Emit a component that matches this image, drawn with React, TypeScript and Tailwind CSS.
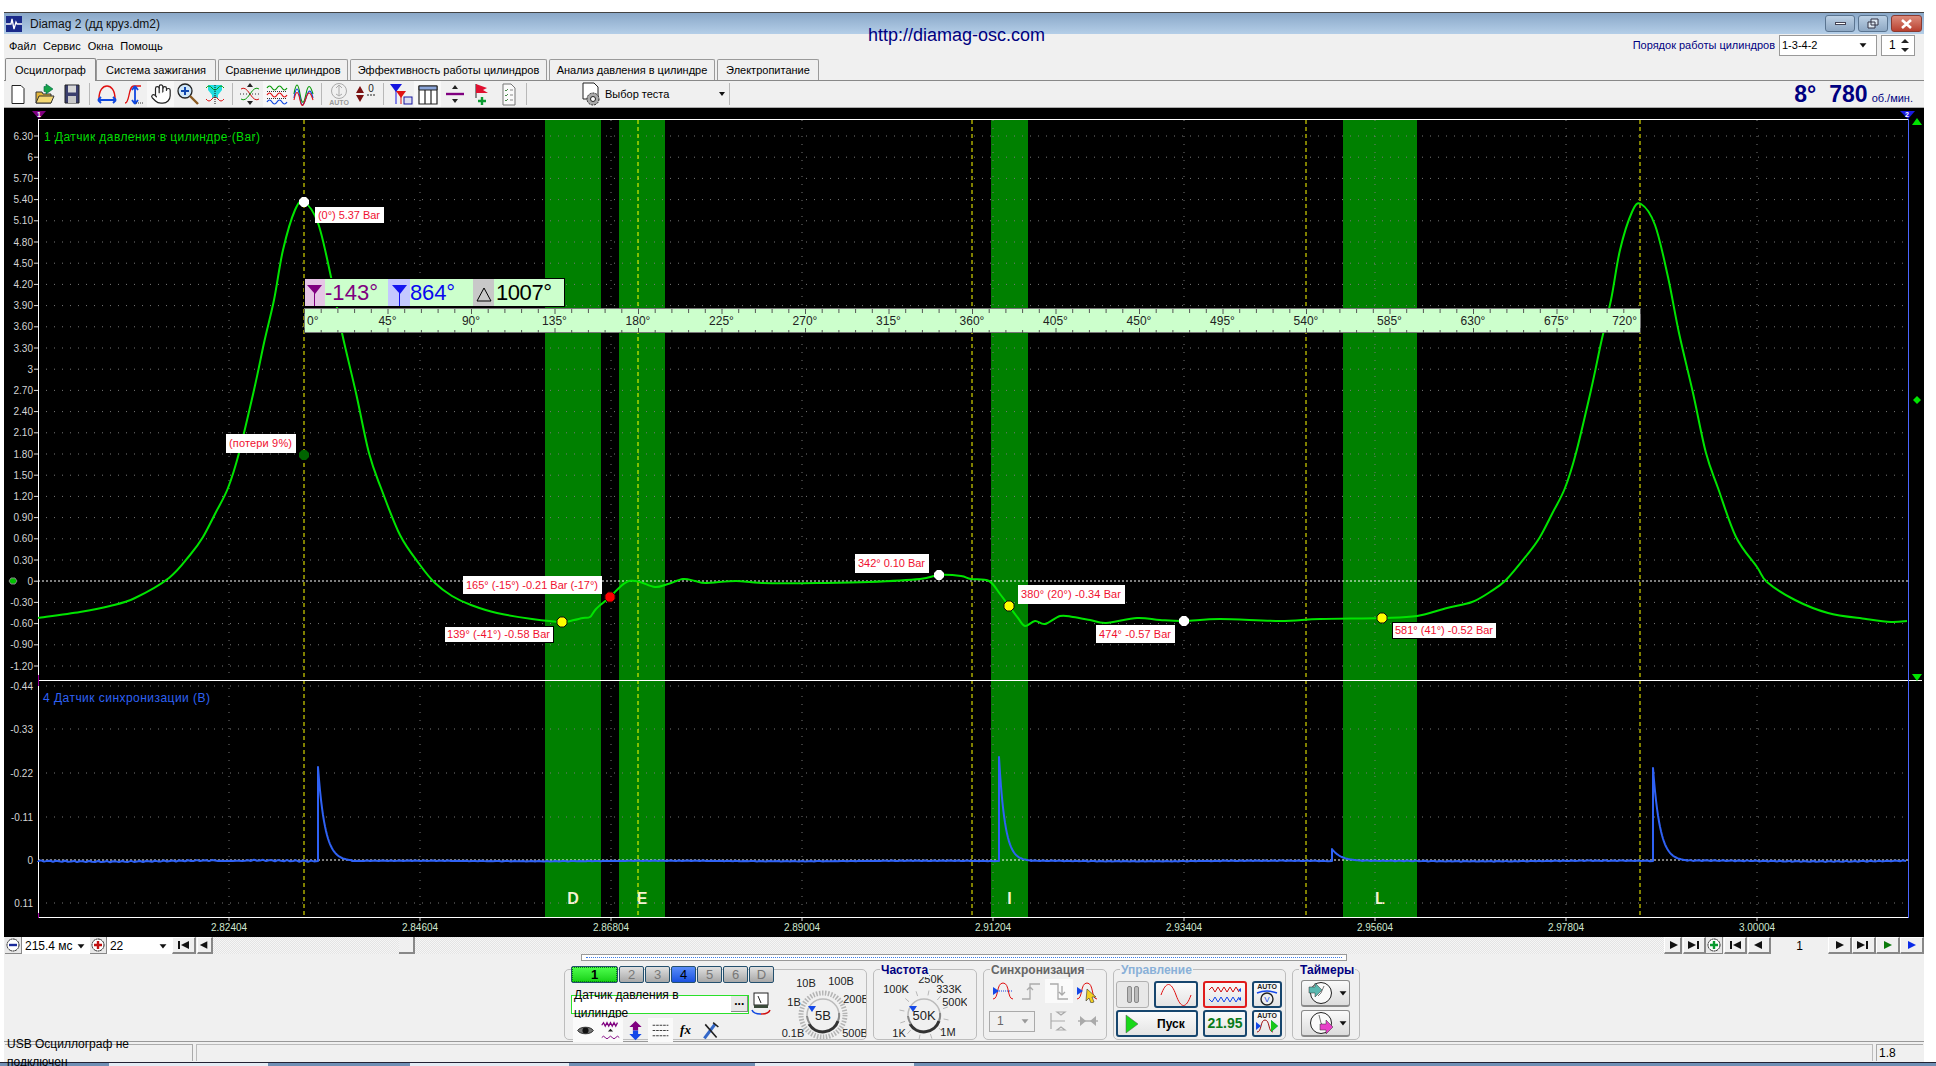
import type { ReactNode } from 'react';
import { Hand } from 'lucide-react';

type Pt = [number, number];

const smooth = (pts: Pt[]) => {
  let d = `M${pts[0][0]} ${pts[0][1]}`;
  for (let i = 0; i < pts.length - 1; i++) {
    const p0 = pts[Math.max(i - 1, 0)];
    const p1 = pts[i];
    const p2 = pts[i + 1];
    const p3 = pts[Math.min(i + 2, pts.length - 1)];
    const c1x = p1[0] + (p2[0] - p0[0]) / 6;
    const c1y = p1[1] + (p2[1] - p0[1]) / 6;
    const c2x = p2[0] - (p3[0] - p1[0]) / 6;
    const c2y = p2[1] - (p3[1] - p1[1]) / 6;
    d += `C${c1x.toFixed(1)} ${c1y.toFixed(1)} ${c2x.toFixed(1)} ${c2y.toFixed(1)} ${p2[0]} ${p2[1]}`;
  }
  return d;
};

const GREEN_PTS: Pt[] = [
  [38, 618], [80, 612], [110, 606], [135, 598], [169, 578], [190, 555], [203, 537], [216, 512], [228, 488], [239, 453], [254, 390], [264, 343],
  [274, 300], [283, 250], [295, 210], [304, 202], [318, 223], [331, 277], [342, 333], [356, 393], [369, 453], [381, 488],
  [400, 535], [420, 565], [435, 583], [452, 596], [471, 605], [497, 613], [532, 619], [562, 622], [574, 620], [583, 618], [590, 617], [596, 609],
  [610, 597], [620, 587], [629, 581], [640, 582], [655, 587], [668, 584], [683, 579], [695, 581], [706, 583], [736, 581], [762, 583],
  [818, 583], [869, 582], [920, 579], [939, 575], [961, 576], [971, 579], [989, 581], [1000, 594], [1009, 606], [1018, 618], [1025, 626],
  [1035, 621], [1045, 624], [1060, 616], [1073, 617], [1090, 620], [1106, 623], [1137, 618], [1160, 620], [1184, 621], [1220, 619], [1280, 621],
  [1320, 619], [1382, 618], [1417, 616], [1447, 608], [1472, 602], [1490, 592], [1506, 580], [1527, 555], [1540, 537], [1553, 512], [1565, 488],
  [1576, 453], [1591, 390], [1601, 343], [1611, 300], [1620, 250], [1632, 212], [1641, 204], [1655, 225], [1668, 277], [1679, 333], [1693, 393],
  [1706, 453], [1718, 488], [1736, 537], [1757, 567], [1767, 582], [1795, 600], [1828, 613], [1866, 619], [1891, 622], [1907, 621],
];

const spike = (x: number, top: number, tau: number, len: number) => {
  let s = `L${x} 861L${x} ${top}`;
  for (let dx = 1; dx <= len; dx++) {
    s += `L${x + dx} ${(861 - (861 - top) * Math.exp(-dx / tau)).toFixed(1)}`;
  }
  return s;
};

const baseline = (a: number, b: number, amp: number) => {
  let s = '';
  for (let x = a; x < b; x += 3) {
    const n = Math.sin(x * 1.7) * Math.cos(x * 0.37);
    s += `L${x} ${(861 + n * amp).toFixed(1)}`;
  }
  return s;
};

const BLUE_PATH =
  'M38 861' +
  baseline(38, 218, 1.2) +
  baseline(218, 248, 0.3) +
  baseline(248, 317, 1.4) +
  spike(318, 767, 7, 34) +
  baseline(352, 998, 0.5) +
  spike(999, 757, 6, 32) +
  baseline(1031, 1331, 0.6) +
  spike(1332, 849, 9, 30) +
  baseline(1362, 1652, 0.7) +
  spike(1653, 768, 7, 34) +
  baseline(1687, 1908, 0.9);

const Y_TOP = ['6.30', '6', '5.70', '5.40', '5.10', '4.80', '4.50', '4.20', '3.90', '3.60', '3.30', '3', '2.70', '2.40', '2.10', '1.80', '1.50', '1.20', '0.90', '0.60', '0.30', '0', '-0.30', '-0.60', '-0.90', '-1.20'];
const Y_LOW: [string, number][] = [['-0.44', 686], ['-0.33', 729], ['-0.22', 773], ['-0.11', 817], ['0', 860], ['0.11', 903]];
const X_TICKS = ['2.82404', '2.84604', '2.86804', '2.89004', '2.91204', '2.93404', '2.95604', '2.97804', '3.00004'];
const CURSORS = [304, 638, 972, 1306, 1640];
const ZONES: [string, number, number][] = [['D', 545, 601], ['E', 619, 665], ['I', 991, 1028], ['L', 1343, 1417]];
const LABELS: [string, number, number, number, number, boolean?][] = [
  ['(0°) 5.37 Bar', 315, 383, 207, 222],
  ['(потери 9%)', 226, 295, 434, 452],
  ['165° (-15°) -0.21 Bar (-17°)', 463, 601, 576, 593],
  ['139° (-41°) -0.58 Bar', 444, 553, 626, 642, true],
  ['342° 0.10 Bar', 855, 928, 554, 572],
  ['380° (20°) -0.34 Bar', 1018, 1124, 585, 603],
  ['474° -0.57 Bar', 1096, 1174, 625, 642],
  ['581° (41°) -0.52 Bar', 1392, 1496, 622, 638, true],
];

const Hex = ({ x, y, c, line }: { x: number; y: number; c: string; line?: string }) => (
  <path d={`M${x - 2} ${y - 5}h4l3 3v4l-3 3h-4l-3 -3v-4z`} fill={c} stroke={line ?? 'none'} strokeWidth={line ? 1 : 0} />
);

const Chart = () => {
  const yTop = (i: number) => 136 + i * 21.2;
  return (
    <svg viewBox="4 108 1920 829" width={1920} height={829} className="block bg-black">
      {/* green zones */}
      {ZONES.map(([n, a, b]) => (
        <g key={n}>
          <rect x={a} y={120} width={b - a} height={797} fill="#008000" />
          <text x={(a + b) / 2} y={904} textAnchor="middle" fontSize={16} fontWeight={700} fill="#f4f4d0">{n}</text>
        </g>
      ))}
      {/* grid */}
      {Y_TOP.map((v, i) => (
        <g key={v}>
          {v !== '0' && <line x1={38} x2={1908} y1={yTop(i)} y2={yTop(i)} stroke="#777" strokeDasharray="1 7" />}
          <line x1={34} x2={38} y1={yTop(i)} y2={yTop(i)} stroke="#ddd" />
          <text x={33} y={yTop(i) + 3.5} textAnchor="end" fontSize={10} fill="#d4d4d4">{v}</text>
        </g>
      ))}
      {Y_LOW.map(([v, y]) => (
        <g key={v}>
          {v !== '0' && <line x1={38} x2={1908} y1={y} y2={y} stroke="#777" strokeDasharray="1 7" />}
          <text x={33} y={y + 3.5} textAnchor="end" fontSize={10} fill="#d4d4d4">{v}</text>
        </g>
      ))}
      {X_TICKS.map((t, i) => {
        const x = 229 + i * 191;
        return (
          <g key={t}>
            <line x1={x} x2={x} y1={120} y2={917} stroke="#777" strokeDasharray="1 7" />
            <line x1={x} x2={x} y1={917} y2={921} stroke="#ddd" />
            <text x={x} y={931} textAnchor="middle" fontSize={10} fill="#cfe6cf">{t}</text>
          </g>
        );
      })}
      <line x1={38} x2={1908} y1={581} y2={581} stroke="#fff" strokeDasharray="2 2" />
      <line x1={38} x2={1908} y1={860} y2={860} stroke="#fff" strokeDasharray="2 2" />
      {CURSORS.map((x) => (
        <line key={x} x1={x} x2={x} y1={120} y2={917} stroke="#ffff00" strokeDasharray="4 3" />
      ))}
      {/* frame */}
      <line x1={38} x2={1908} y1={119.5} y2={119.5} stroke="#fff" />
      <line x1={38} x2={1922} y1={680.5} y2={680.5} stroke="#fff" />
      <line x1={38} x2={1908} y1={917.5} y2={917.5} stroke="#fff" />
      <line x1={38.5} x2={38.5} y1={119} y2={918} stroke="#fff" />
      <line x1={1908.5} x2={1908.5} y1={119} y2={918} stroke="#4a66ff" />
      <line x1={38.5} x2={38.5} y1={675} y2={686} stroke="#a000a0" />
      <line x1={38.5} x2={38.5} y1={913} y2={918} stroke="#a000a0" />

      {/* traces */}
      <path d={smooth(GREEN_PTS)} fill="none" stroke="#00e400" strokeWidth={2} />
      <path d={BLUE_PATH} fill="none" stroke="#2f62f5" strokeWidth={2} strokeLinejoin="round" />

      {/* channel captions */}
      <text x={44} y={141} fontSize={12} fill="#00dc00" textLength={216}>1 Датчик давления в цилиндре (Bar)</text>
      <text x={43} y={702} fontSize={12} fill="#2f62f5" textLength={167}>4 Датчик синхронизации (В)</text>

      {/* side markers */}
      <path d="M32 111h14l-7 8z" fill="#800080" />
      <text x={39} y={117} textAnchor="middle" fontSize={7} fontWeight={700} fill="#fff">1</text>
      <path d="M1900 111h15l-7 8z" fill="#1a1ae0" />
      <text x={1907} y={117} textAnchor="middle" fontSize={7} fontWeight={700} fill="#fff">2</text>
      <path d="M1912 125l5 -7 5 7z" fill="#00e400" />
      <path d="M1913 400l4 -4 4 4 -4 4z" fill="#00e400" />
      <path d="M1912 674h10l-5 7z" fill="#00e400" />
      <path d="M11 578h4l2 3 -2 3h-4l-2 -3z" fill="#00c000" stroke="#888" />

      {/* degree readout */}
      <rect x={304.5} y={278.5} width={260} height={28} fill="#ccffcc" stroke="#000" />
      <rect x={305} y={279} width={20} height={27} fill="#e6c6e6" />
      <rect x={388} y={279} width={22} height={27} fill="#c4c8ff" />
      <rect x={473} y={279} width={21} height={27} fill="#c8c8c8" />
      <path d="M307 285h15l-7 9z" fill="#800080" />
      <line x1={314.5} x2={314.5} y1={288} y2={306} stroke="#800080" />
      <path d="M392 285h15l-7 9z" fill="#1414f0" />
      <line x1={399.5} x2={399.5} y1={288} y2={306} stroke="#1414f0" />
      <path d="M477 301l7 -13 7 13z" fill="none" stroke="#000" />
      <text x={325} y={300} fontSize={22} fill="#800080" textLength={53}>-143°</text>
      <text x={410} y={300} fontSize={22} fill="#0a0af0" textLength={45}>864°</text>
      <text x={496} y={300} fontSize={22} fill="#000" textLength={56}>1007°</text>

      {/* degree ruler */}
      <rect x={304.5} y={308.5} width={1336} height={24} fill="#ccffcc" stroke="#777" />
      {Array.from({ length: 81 }, (_, i) => {
        const x = 304.5 + i * 16.7;
        const long = i % 5 === 0;
        return (
          <g key={i}>
            <line x1={x} x2={x} y1={309} y2={long ? 314 : 313} stroke="#555" />
            <line x1={x} x2={x} y1={long ? 328 : 330} y2={333} stroke="#555" />
          </g>
        );
      })}
      {Array.from({ length: 17 }, (_, i) => {
        const x = 304 + i * 83.5;
        const first = i === 0;
        const last = i === 16;
        return (
          <text key={i} x={first ? 307 : last ? 1637 : x} y={325} fontSize={12} fill="#222" textAnchor={first ? 'start' : last ? 'end' : 'middle'}>
            {i * 45}°
          </text>
        );
      })}

      {/* measure points */}
      <Hex x={304} y={202} c="#fff" />
      <Hex x={939} y={575} c="#fff" />
      <Hex x={1184} y={621} c="#fff" />
      <Hex x={562} y={622} c="#ffff00" line="#111" />
      <Hex x={1009} y={606} c="#ffff00" line="#111" />
      <Hex x={1382} y={618} c="#ffff00" line="#111" />
      <Hex x={610} y={597} c="#ff0000" line="#400" />
      <Hex x={304} y={455} c="#006400" />

      {LABELS.map(([t, a, b, c, d, frame]) => (
        <g key={t}>
          <rect x={a + 0.5} y={c + 0.5} width={b - a} height={d - c} fill="#fff" stroke={frame ? '#000' : '#fff'} />
          <text x={a + 3} y={(c + d) / 2 + 4} fontSize={11} fill="#f01030" textLength={b - a - 6}>{t}</text>
        </g>
      ))}
    </svg>
  );
};

/* small toolbar drawings, 24x24 */
const Ic = ({ children, s = 24 }: { children: ReactNode; s?: number }) => (
  <svg width={s} height={s} viewBox="0 0 24 24" fill="none">{children}</svg>
);

const ICONS: Record<string, ReactNode> = {
  doc: <path d="M6 3.5h9l3 3v15H6z" fill="#fff" stroke="#222" />,
  open: (
    <>
      <path d="M3 10h6l1 2h8v9H3z" fill="#e2b53a" stroke="#333" />
      <path d="M3 21l3 -7h15l-3 7z" fill="#f4d873" stroke="#333" />
      <path d="M13 2l7 5 -7 5v-2.500h-2v-5h2z" fill="#16a34a" stroke="#064" strokeWidth={0.6} />
    </>
  ),
  save: (
    <>
      <path d="M5 3h14v18H5z" fill="#3b3f6e" stroke="#222" />
      <path d="M8 3.500h8v7H8z" fill="#d8d8d8" />
      <path d="M8 14h8v7H8z" fill="#c8c8c8" />
    </>
  ),
  arch: (
    <>
      <path d="M4 17C4 8 8 4 12 4s8 4 8 13" stroke="#e01010" strokeWidth={1.5} />
      <path d="M3 18h18M3 18l3 -3M3 18l3 3M21 18l-3 -3M21 18l-3 3" stroke="#1048e0" strokeWidth={1.8} />
    </>
  ),
  scurve: (
    <>
      <path d="M3 21c5 0 3 -17 9 -17h7" stroke="#e01010" strokeWidth={1.3} />
      <path d="M13 4v18M13 4l-3 4M13 4l3 4M13 22l-3 -4M13 22l3 -4" stroke="#1048e0" strokeWidth={1.8} />
      <path d="M14 21h7" stroke="#333" strokeDasharray="1 1" />
    </>
  ),
  zoom: (
    <>
      <circle cx={9} cy={9} r={7} fill="#cfe6f8" stroke="#222" strokeWidth={1.3} />
      <path d="M9 5v8M5 9h8" stroke="#1048b0" strokeWidth={2} />
      <path d="M14 14l8 8" stroke="#8a5a20" strokeWidth={2.4} />
    </>
  ),
  funnel: (
    <>
      <path d="M5 3h14v5l-4 5v3h-6v-3L5 8z" fill="#22dde0" />
      <path d="M3 6q3 -4 6 0t6 0 6 0" stroke="#0a9a0a" />
      <path d="M3 17q3 4 6 0t6 0 6 0" stroke="#e01010" />
      <path d="M12 3v19" stroke="#111" strokeDasharray="1 1" />
    </>
  ),
  cross: (
    <>
      <path d="M3 7q4 -3 9 5t9 5" stroke="#d01010" />
      <path d="M3 17q4 3 9 -5t9 -5" stroke="#0a9a0a" />
      <path d="M2 12h20" stroke="#333" strokeDasharray="1 2" />
      <path d="M12 1l-3 4h6zM12 23l-3 -4h6z" fill="#222" />
    </>
  ),
  stack: (
    <>
      <path d="M2 6q2.500 -4 5 0t5 0 5 0 5 0" stroke="#0a9a0a" strokeWidth={1.2} />
      <path d="M2 13q2.500 -4 5 0t5 0 5 0 5 0" stroke="#e01010" strokeWidth={1.2} />
      <path d="M2 20q2.500 -4 5 0t5 0 5 0 5 0" stroke="#1048e0" strokeWidth={1.2} />
      <path d="M2 9.500h20M2 16.500h20" stroke="#333" strokeDasharray="1 1" />
    </>
  ),
  over: (
    <>
      <path d="M2 12c2 -12 4 -12 6 0s4 10 6 0 4 -10 7 0" stroke="#0a9a0a" strokeWidth={1.2} />
      <path d="M2 16c2 -12 4 -12 6 0s4 6 6 0 4 -12 7 0" stroke="#1048e0" strokeWidth={1.2} />
      <path d="M2 18c2 -10 4 -10 6 0s4 4 6 -2 4 -8 7 2" stroke="#e01010" strokeWidth={1.1} />
    </>
  ),
  autoOff: (
    <>
      <circle cx={12} cy={9} r={7.500} stroke="#aaa" />
      <path d="M12 3v10M9 6l3 -3 3 3M9 12l3 2 3 -2" stroke="#aaa" />
      <text x={12} y={23} textAnchor="middle" fontSize={7} fontWeight={700} fill="#999">AUTO</text>
    </>
  ),
  zero: (
    <>
      <path d="M6 4l-4 7h8zM6 20l-4 -7h8z" fill="#7a1010" />
      <text x={17} y={10} textAnchor="middle" fontSize={10} fill="#222">0</text>
      <path d="M13 13h9" stroke="#222" strokeDasharray="2 1" />
    </>
  ),
  trig: (
    <>
      <path d="M1 2h12l-6 8z" fill="#1414e0" />
      <path d="M7 8v14" stroke="#1414e0" />
      <path d="M7 9h10l-5 7z" fill="#e01010" />
      <path d="M12 14v8" stroke="#e01010" />
      <rect x={15} y={15} width={8} height={7} fill="#dde" stroke="#1414a0" />
    </>
  ),
  table: (
    <>
      <path d="M3 4h18v18H3z" fill="#fff" stroke="#222" strokeWidth={1.2} />
      <path d="M3 4h18v4H3z" fill="#8aa4d8" stroke="#222" />
      <path d="M9 8v14M15 8v14" stroke="#222" strokeWidth={1.2} />
    </>
  ),
  divide: (
    <>
      <path d="M3 12h18" stroke="#800080" strokeWidth={2.4} />
      <path d="M12 3l-3 4h6zM12 21l-3 -4h6z" fill="#222" />
    </>
  ),
  flag: (
    <>
      <path d="M6 2v14" stroke="#222" />
      <path d="M6 2l11 4 -4 2 5 3H6z" fill="#e01030" />
      <path d="M12 15v8M8 19h8" stroke="#0a9a30" strokeWidth={2.4} />
    </>
  ),
  list: (
    <>
      <path d="M6 2h8l4 4v17H6z" fill="#fafafa" stroke="#777" />
      <path d="M8 8l1 1 2 -2M8 13l1 1 2 -2M8 18l1 1 2 -2" stroke="#4a8a4a" />
      <path d="M13 8h3M13 13h3M13 18h3" stroke="#888" />
    </>
  ),
  testDoc: (
    <>
      <path d="M4 1h11l4 4v12H4z" fill="#fff" stroke="#222" />
      <circle cx={14} cy={17} r={6} fill="#aaa" stroke="#222" strokeDasharray="2 1" />
      <circle cx={14} cy={17} r={2.500} fill="#fff" stroke="#222" />
    </>
  ),
  eye: (
    <>
      <path d="M3 12c3 -5 15 -5 18 0 -3 5 -15 5 -18 0z" fill="#777" stroke="#222" />
      <circle cx={12} cy={12} r={3.500} fill="#111" />
    </>
  ),
  chanWave: (
    <>
      <path d="M2 6l2 -3 2 4 2 -4 2 4 2 -4 2 4 2 -4 2 4 2 -4" stroke="#800080" strokeWidth={1.4} />
      <path d="M2 20q2 -3 4 0t4 0 4 0 4 0 4 0" stroke="#800080" strokeWidth={1.1} />
      <path d="M12 10l-3 3h6z" fill="#222" />
    </>
  ),
  updown: (
    <>
      <path d="M12 1l7 7h-4v4H9V8H5z" fill="#800080" />
      <path d="M12 23l7 -7h-4v-4H9v4H5z" fill="#1448e8" />
    </>
  ),
  lines: <path d="M3 6h18M3 12h18M3 18h18" stroke="#222" strokeDasharray="3 1" />,
  tools: (
    <>
      <path d="M5 21L17 5" stroke="#3468c8" strokeWidth={3.5} />
      <path d="M6 5l13 15M15 3l6 5" stroke="#222" strokeWidth={1.8} />
    </>
  ),
  meter: (
    <>
      <rect x={5} y={1} width={14} height={12} fill="#fff" stroke="#222" />
      <path d="M12 11L9 4" stroke="#222" />
      <path d="M5 13h14v3H5z" fill="#3a4a3a" />
      <path d="M3 18a9 5 0 0 0 9 4" stroke="#1048e0" strokeWidth={1.5} />
      <path d="M21 18a9 5 0 0 1 -9 4" stroke="#d01010" strokeWidth={1.5} />
    </>
  ),
  edgeUp: (
    <>
      <path d="M2 20c6 0 3 -16 10 -16s4 16 10 16" stroke="#e01010" strokeWidth={1} />
      <path d="M2 12h20" stroke="#1448e8" strokeDasharray="1 1" />
      <path d="M2 8l6 4 -6 4z" fill="#1448e8" />
    </>
  ),
  stepUp: <path d="M3 20h8V5h10M11 17V9M8 11l3 -3 3 3" stroke="#aaa" strokeWidth={1.3} />,
  stepDown: <path d="M3 5h8v15h10M15 7v9M12 13l3 3 3 -3" stroke="#aaa" strokeWidth={1.3} />,
  edgeCursor: (
    <>
      <path d="M2 20c6 0 3 -16 10 -16s4 16 10 16" stroke="#e01010" strokeWidth={1} />
      <path d="M2 8l6 4 -6 4z" fill="#1448e8" />
      <path d="M12 10l9 8h-4l2 5 -3 1 -2 -5 -3 3z" fill="#f4d020" stroke="#333" strokeWidth={0.6} />
    </>
  ),
  squeezeOut: <path d="M3 4v16M3 12h14M13 6l-4 -3h8zM13 18l-4 3h8z" stroke="#aaa" strokeWidth={1.2} />,
  squeezeIn: (
    <>
      <path d="M2 12h20" stroke="#aaa" strokeWidth={1.4} />
      <path d="M4 7l6 5 -6 5zM20 7l-6 5 6 5z" fill="#aaa" />
    </>
  ),
  autoV: (
    <>
      <text x={12} y={6} textAnchor="middle" fontSize={7} fontWeight={700} fill="#222">AUTO</text>
      <path d="M2 10q10 -4 20 0" stroke="#1448e8" strokeWidth={1.4} />
      <circle cx={12} cy={16} r={6} fill="#eee" stroke="#222" strokeWidth={1.4} />
      <text x={12} y={19} textAnchor="middle" fontSize={8} fill="#1448e8">V</text>
    </>
  ),
  autoSync: (
    <>
      <text x={12} y={6} textAnchor="middle" fontSize={7} fontWeight={700} fill="#222">AUTO</text>
      <path d="M2 20c5 0 3 -12 8 -12s3 12 8 12" stroke="#a01010" />
      <path d="M1 10l5 4 -5 4zM16 8l7 6 -7 6z" fill="#1448e8" />
      <path d="M16 8l7 6 -7 6z" fill="#18c818" />
    </>
  ),
};

const ToolBtn = ({ icon, on, children }: { icon?: string; on?: boolean; children?: ReactNode }) => (
  <div className={`w-[27px] h-[26px] flex items-center justify-center ${on ? 'bg-[#f8f8f8]' : ''}`}>
    {icon ? <Ic>{ICONS[icon]}</Ic> : children}
  </div>
);

const ToolSep = () => (
  <div className="w-2 h-[26px] flex justify-center">
    <div className="w-px h-[22px] mt-[2px] bg-[#b8b8b8]" />
  </div>
);

const TABS: [string, number][] = [
  ['Система зажигания', 120],
  ['Сравнение цилиндров', 130],
  ['Эффективность работы цилиндров', 197],
  ['Анализ давления в цилиндре', 166],
  ['Электропитание', 102],
];

const Triangle = ({ d, fill = '#111', w = 14 }: { d: string; fill?: string; w?: number }) => (
  <svg width={w} height={12} viewBox="0 0 14 12">
    <path d={d} fill={fill} />
  </svg>
);

const PLAY = 'M4 2l8 4 -8 4z';
const BACK = 'M10 2L2 6l8 4z';
const LAST = 'M1 2l8 4 -8 4zM10 2h2v8h-2z';
const FIRST = 'M13 2L5 6l8 4zM2 2h2v8H2z';

const NavBtn = ({ d, w, fill, flat }: { d: string; w: number; fill?: string; flat?: boolean }) => (
  <div
    className={`h-[17px] flex items-center justify-center bg-[#f0f0f0] border-r-2 border-b-2 border-r-[#888] border-b-[#888] border-l border-t border-l-white border-t-white ${flat ? 'ml-px' : ''}`}
    style={{ width: w }}
  >
    <Triangle d={d} fill={fill} />
  </div>
);

const RoundBtn = ({ sign, c }: { sign: 'm' | 'p'; c: string }) => (
  <div className="w-[17px] h-[17px] flex items-center justify-center bg-[#e8e8e8] border-r border-b border-[#888]">
    <svg width={14} height={14} viewBox="0 0 14 14">
      <circle cx={7} cy={7} r={6} fill="#fff" stroke="#222" strokeDasharray="2 0.5" />
      <path d={sign === 'p' ? 'M7 3v8M3 7h8' : 'M3 7h8'} stroke={c} strokeWidth={2.4} />
    </svg>
  </div>
);

const ChanBtn = ({ t, tone }: { t: string; tone: 'on' | 'blue' | 'off' }) => (
  <div
    className={`h-[17px] flex items-center justify-center text-[13px] rounded-[2px] border border-[#24506e] ${
      tone === 'on'
        ? 'w-[47px] font-bold bg-linear-to-b from-[#4cff4c] to-[#10d010] text-black outline-1 -outline-offset-2 outline-dotted outline-[#0a7a0a]'
        : tone === 'blue'
          ? 'w-[25px] bg-linear-to-b from-[#5a8cf8] to-[#1a50e0] text-black'
          : 'w-[25px] bg-linear-to-b from-[#e0e0e0] to-[#a8a8a8] text-[#777]'
    }`}
  >
    {t}
  </div>
);

const GroupBox = ({ w, title, tc, lx, children, className = '' }: { w: number; title: string; tc?: string; lx?: number; children: ReactNode; className?: string }) => (
  <div className={`relative h-[71px] rounded-[5px] border border-[#bdbdbd] shrink-0 ${className}`} style={{ width: w }}>
    {title && (
      <div className={`absolute -top-[7px] px-[1px] bg-[#f0f0f0] text-[12px] leading-[14px] font-bold ${tc}`} style={{ left: lx ?? 6 }}>
        {title}
      </div>
    )}
    {children}
  </div>
);

type KnobLabel = [string, number, number];

const Knob = ({ labels, value, dense }: { labels: KnobLabel[]; value: string; dense?: boolean }) => (
  <svg width={86} height={69} viewBox="-43 -45 86 69" className="shrink-0">
    {dense ? (
      <circle r={22} fill="none" stroke="#b4b4b4" strokeWidth={5} strokeDasharray="1.500 1.500" />
    ) : (
      Array.from({ length: 12 }, (_, i) => {
        const a = (i * Math.PI * 2) / 12 + 0.2;
        return <line key={i} x1={Math.cos(a) * 20} y1={Math.sin(a) * 20} x2={Math.cos(a) * 25} y2={Math.sin(a) * 25} stroke="#b8b8b8" />;
      })
    )}
    <circle r={16} fill="#f0f0f0" stroke="#bbb" strokeWidth={1.5} />
    <path d="M-14 9A16 16 0 0 0 15 6" fill="none" stroke="#333" strokeWidth={3} />
    <path d="M-16 1A16 16 0 0 0 -13 9M15 6A16 16 0 0 0 16 -2" fill="none" stroke="#888" strokeWidth={2} />
    <path d="M-15 -9h8l-4 6z" fill="#1448e8" />
    <text x={0} y={5} textAnchor="middle" fontSize={13} fill="#222">{value}</text>
    {labels.map(([t, x, y]) => (
      <text key={t} x={x} y={y} textAnchor="middle" fontSize={11} fill="#222">{t}</text>
    ))}
  </svg>
);

const CtlBtn = ({ w, red, children, className = '' }: { w: number; red?: boolean; children: ReactNode; className?: string }) => (
  <div
    className={`h-[27px] flex items-center justify-center rounded-[3px] border-2 bg-linear-to-b from-[#fbfbfb] to-[#e4e4e4] ${red ? 'border-[#e01c1c]' : 'border-[#17466e]'} ${className}`}
    style={{ width: w }}
  >
    {children}
  </div>
);

const Clock = ({ hand, arrow }: { hand: string; arrow: string }) => (
  <svg width={26} height={24} viewBox="0 0 26 24">
    <circle cx={13} cy={12} r={10.500} fill="#fafafa" stroke="#222" />
    <path d={hand} stroke="#777" fill="none" />
    <path d={arrow} fill="#333" />
  </svg>
);

const TimerBtn = ({ hand, arrow, c }: { hand: string; arrow: string; c: string }) => (
  <div className="w-[49px] h-[27px] flex items-center gap-[3px] pl-[6px] rounded-[3px] border border-[#8a8a8a] border-b-2 bg-linear-to-b from-[#fafafa] to-[#dcdcdc]">
    <svg width={26} height={24} viewBox="0 0 26 24">
      <circle cx={13} cy={12} r={10.500} fill="#fafafa" stroke="#222" />
      <path d={hand} stroke="#777" fill="none" />
      <path d={arrow} fill={c} stroke="#333" strokeWidth={0.5} />
    </svg>
    <Triangle d="M3 4h8l-4 5z" w={12} />
  </div>
);

const App = () => (
  <div className="relative w-[1936px] h-[1066px] overflow-hidden bg-white font-['Liberation_Sans',sans-serif] text-[11px] text-black">
    <div className="h-3" />
    <div className="ml-1 w-[1920px] bg-[#f0f0f0] border-t border-[#444]">
      {/* title bar */}
      <div className="relative h-[21px] flex items-center bg-linear-to-b from-[#8aa8c8] to-[#b4cee8] pl-[2px]">
        <svg width={16} height={16} viewBox="0 0 16 16" className="mr-2 shrink-0">
          <rect width={16} height={16} fill="#1a2a8a" />
          <path d="M0 8h5l1 -5 2 10 2 -7 1 2h5" fill="none" stroke="#fff" strokeWidth={1.3} />
        </svg>
        <span className="text-[12px] text-[#111]">Diamag 2 (дд круз.dm2)</span>
        <div className="ml-auto mr-[2px] flex gap-[3px]">
          <div className="w-[30px] h-[17px] flex items-center justify-center rounded-[3px] border border-[#5a7490] bg-linear-to-b from-[#bcd0e4] to-[#8ea8c4]">
            <div className="w-[11px] h-[3px] bg-white border border-[#445]" />
          </div>
          <div className="w-[30px] h-[17px] flex items-center justify-center rounded-[3px] border border-[#5a7490] bg-linear-to-b from-[#bcd0e4] to-[#8ea8c4]">
            <svg width={12} height={11} viewBox="0 0 12 11">
              <path d="M4 1h7v6H4zM1 4h7v6H1z" fill="#dde8f2" stroke="#334" />
            </svg>
          </div>
          <div className="w-[31px] h-[17px] flex items-center justify-center rounded-[3px] border border-[#8a3a30] bg-linear-to-b from-[#dc8a7a] to-[#b84030]">
            <svg width={13} height={10} viewBox="0 0 13 10">
              <path d="M2 1l9 8M11 1L2 9" stroke="#fff" strokeWidth={2.6} />
            </svg>
          </div>
        </div>
      </div>

      {/* menu row */}
      <div className="relative h-[24px] flex items-center pl-[5px] text-[11px]">
        <span className="mr-[7px]">Файл</span>
        <span className="mr-[7px]">Сервис</span>
        <span className="mr-[7px]">Окна</span>
        <span>Помощь</span>
        <div className="ml-auto mr-[9px] flex items-center h-[21px] -mt-[2px]">
          <span className="text-[11px] text-[#000080] mr-[4px]">Порядок работы цилиндров</span>
          <div className="w-[98px] h-[21px] flex items-center justify-between pl-[2px] pr-[7px] bg-white border border-[#999]">
            <span>1-3-4-2</span>
            <Triangle d="M3 4h8l-4 5z" w={12} />
          </div>
          <div className="ml-1 w-[34px] h-[21px] flex items-center justify-between pl-[7px] pr-[4px] bg-white border border-[#999] text-[12px]">
            <span>1</span>
            <svg width={10} height={15} viewBox="0 0 10 15">
              <path d="M5 1l4 4H1zM5 14l4 -4H1z" fill="#222" />
            </svg>
          </div>
        </div>
      </div>
      <div className="absolute left-[868px] top-[24px] text-[18px] leading-[22px] text-[#000080]">http://diamag-osc.com</div>

      {/* tabs */}
      <div className="h-[23px] flex items-end pl-px border-b border-[#888]">
        <div className="w-[91px] h-[23px] -mb-px flex items-center justify-center bg-[#f0f0f0] border border-b-0 border-[#888] rounded-t-[2px] z-10">Осциллограф</div>
        {TABS.map(([t, w]) => (
          <div key={t} className="h-[21px] mr-[2px] flex items-center justify-center border border-b-0 border-[#9a9a9a] rounded-t-[2px] bg-[#f0f0f0]" style={{ width: w }}>
            {t}
          </div>
        ))}
      </div>

      {/* toolbar */}
      <div className="relative h-[27px] flex items-center border-b border-[#aaa]">
        <ToolBtn icon="doc" />
        <ToolBtn icon="open" />
        <ToolBtn icon="save" />
        <ToolSep />
        <ToolBtn icon="arch" />
        <ToolBtn icon="scurve" />
        <ToolBtn on>
          <Hand size={22} strokeWidth={1.3} color="#222" fill="#fff" />
        </ToolBtn>
        <ToolBtn icon="zoom" />
        <ToolBtn icon="funnel" />
        <ToolSep />
        <ToolBtn icon="cross" />
        <ToolBtn icon="stack" on />
        <ToolBtn icon="over" />
        <ToolSep />
        <ToolBtn icon="autoOff" />
        <ToolBtn icon="zero" />
        <ToolSep />
        <ToolBtn icon="trig" />
        <ToolBtn icon="table" on />
        <ToolBtn icon="divide" />
        <ToolBtn icon="flag" />
        <ToolBtn icon="list" />
        <ToolSep />
        <div className="ml-[49px] flex items-center w-[150px]">
          <Ic>{ICONS.testDoc}</Ic>
          <span className="ml-[2px]">Выбор теста</span>
          <span className="ml-auto">
            <Triangle d="M4 4h6l-3 4z" />
          </span>
        </div>
        <div className="w-px h-[22px] bg-[#b8b8b8]" />
        <div className="ml-auto mr-[11px] flex items-baseline text-[#000080]">
          <span className="text-[23px] leading-[26px] font-bold">8°</span>
          <span className="ml-[13px] text-[23px] leading-[26px] font-bold">780</span>
          <span className="ml-[4px] text-[11px]">об./мин.</span>
        </div>
      </div>

      <Chart />

      {/* scroll row */}
      <div className="h-[17px] flex items-stretch pl-px">
        <RoundBtn sign="m" c="#1a2a9a" />
        <div className="w-[68px] bg-white flex items-center justify-between pl-[3px] pr-[3px] text-[12px]">
          <span>215.4 мс</span>
          <Triangle d="M3 4h8l-4 5z" w={12} />
        </div>
        <RoundBtn sign="p" c="#c01010" />
        <div className="w-[65px] bg-white flex items-center justify-between pl-[3px] pr-[3px] text-[12px]">
          <span>22</span>
          <Triangle d="M3 4h8l-4 5z" w={12} />
        </div>
        <NavBtn d={FIRST} w={24} />
        <NavBtn d={BACK} w={16} flat />
        <div className="w-[1452px] relative bg-[repeating-conic-gradient(#e4e4e4_0%_25%,#f6f6f6_0%_50%)] bg-[length:2px_2px]">
          <div className="absolute left-[186px] top-0 w-[16px] h-[17px] bg-[#f0f0f0] border-r-2 border-b-2 border-[#888]" />
        </div>
        <NavBtn d={PLAY} w={18} />
        <NavBtn d={LAST} w={23} flat />
        <RoundBtn sign="p" c="#0a9a30" />
        <NavBtn d={FIRST} w={23} flat />
        <NavBtn d={BACK} w={23} flat />
        <div className="w-[57px] flex items-center justify-center text-[12px]">1</div>
        <NavBtn d={PLAY} w={24} />
        <NavBtn d={LAST} w={24} />
        <NavBtn d={PLAY} w={24} fill="#0a7a0a" />
        <NavBtn d={PLAY} w={24} fill="#0a2ae8" />
      </div>

      {/* control panel */}
      <div className="h-[88px] border-b border-[#999]">
        <div className="ml-[577px] w-[766px] h-[7px] flex items-center justify-between px-[4px] bg-white border border-[#999]">
          <div className="flex-1 border-t border-dotted border-[#3a7ae8]" />
        </div>
        <div className="mt-2 pl-[560px] flex gap-[6px]">
          <GroupBox w={303} title="">
            <div className="flex pl-[6px]">
              <div className="w-[210px] -mt-[4px]">
                <div className="flex gap-[1px]">
                  <ChanBtn t="1" tone="on" />
                  <ChanBtn t="2" tone="off" />
                  <ChanBtn t="3" tone="off" />
                  <ChanBtn t="4" tone="blue" />
                  <ChanBtn t="5" tone="off" />
                  <ChanBtn t="6" tone="off" />
                  <ChanBtn t="D" tone="off" />
                </div>
                <div className="mt-[9px] flex items-center">
                  <div className="w-[178px] h-[19px] flex items-center justify-between pl-[2px] bg-white border border-[#2ae02a] text-[12px]">
                    <span>Датчик давления в цилиндре</span>
                    <div className="w-[17px] h-[16px] flex items-start justify-center bg-[#e8e8e8] border-r border-b border-[#888] font-bold leading-[10px]">...</div>
                  </div>
                  <div className="w-[24px] flex justify-center">
                    <Ic>{ICONS.meter}</Ic>
                  </div>
                </div>
                <div className="mt-[2px] flex pl-[2px]">
                  {(['eye', 'chanWave', 'updown', 'lines', 'fx', 'tools'] as const).map((k) => (
                    <div key={k} className={`w-[25px] h-[24px] flex items-center justify-center ${k === 'chanWave' || k === 'lines' || k === 'eye' ? 'bg-[#fafafa]' : ''}`}>
                      {k === 'fx' ? <span className="text-[13px] italic font-bold font-['Liberation_Serif',serif]">fx</span> : <Ic s={21}>{ICONS[k]}</Ic>}
                    </div>
                  ))}
                </div>
              </div>
              <div className="-ml-[1px]">
                <Knob
                  dense
                  value="5В"
                  labels={[
                    ['10В', -17, -28],
                    ['100В', 18, -30],
                    ['200В', 33, -12],
                    ['500В', 32, 22],
                    ['0.1В', -30, 22],
                    ['1В', -29, -9],
                  ]}
                />
              </div>
            </div>
          </GroupBox>

          <GroupBox w={104} title="Частота" tc="text-[#000080]">
            <div className="flex justify-center -ml-[2px]">
              <Knob
                value="50K"
                labels={[
                  ['250K', 7, -32],
                  ['333K', 25, -22],
                  ['500K', 31, -9],
                  ['1M', 24, 21],
                  ['1K', -25, 22],
                  ['100K', -28, -22],
                ]}
              />
            </div>
          </GroupBox>

          <GroupBox w={124} title="Синхронизация" tc="text-[#666]">
            <div className="pt-[9px] pl-[5px]">
              <div className="flex">
                <div className="w-[28px] flex justify-center"><Ic>{ICONS.edgeUp}</Ic></div>
                <div className="w-[28px] flex justify-center"><Ic>{ICONS.stepUp}</Ic></div>
                <div className="w-[28px] flex justify-center bg-[#fafafa]"><Ic>{ICONS.stepDown}</Ic></div>
                <div className="w-[28px] flex justify-center"><Ic>{ICONS.edgeCursor}</Ic></div>
              </div>
              <div className="mt-[6px] flex items-center">
                <div className="w-[46px] h-[21px] flex items-center justify-between pl-[7px] pr-[3px] border border-[#aaa] text-[12px] text-[#666]">
                  <span>1</span>
                  <Triangle d="M3 4h8l-4 5z" fill="#999" w={12} />
                </div>
                <div className="ml-[11px] w-[28px] flex justify-center"><Ic>{ICONS.squeezeOut}</Ic></div>
                <div className="w-[28px] flex justify-center"><Ic>{ICONS.squeezeIn}</Ic></div>
              </div>
            </div>
          </GroupBox>

          <GroupBox w={173} title="Управление" tc="text-[#8ab0d8]">
            <div className="pl-[2px] pt-[11px] flex flex-wrap gap-x-[5px] gap-y-[2px] w-[172px]">
              <div className="w-[33px] h-[27px] flex items-center justify-center gap-[2px] rounded-[3px] border border-[#b0b0b0] bg-[#e8e8e8]">
                <div className="w-[5px] h-[17px] bg-[#bbb] border border-[#888] rounded-[2px]" />
                <div className="w-[5px] h-[17px] bg-[#bbb] border border-[#888] rounded-[2px]" />
              </div>
              <CtlBtn w={44}>
                <svg width={34} height={22} viewBox="0 0 34 22">
                  <path d="M2 11C7 -3 12 -3 17 11s10 14 15 0" fill="none" stroke="#e01010" />
                </svg>
              </CtlBtn>
              <CtlBtn w={44} red>
                <svg width={36} height={22} viewBox="0 0 36 22">
                  <path d="M2 6l3 -3 3 5 3 -5 3 5 3 -5 3 5 3 -5 3 5 3 -5 3 5" fill="none" stroke="#d01010" />
                  <path d="M2 15l3 3 3 -5 3 5 3 -5 3 5 3 -5 3 5 3 -5 3 5 3 -5" fill="none" stroke="#1448e8" />
                  <path d="M34 4l-3 2 3 2zM34 13l-3 2 3 2z" fill="#1448e8" />
                </svg>
              </CtlBtn>
              <CtlBtn w={30}><Ic>{ICONS.autoV}</Ic></CtlBtn>
              <CtlBtn w={82} className="justify-start pl-[7px]">
                <svg width={14} height={20} viewBox="0 0 14 20">
                  <path d="M1 1l12 9 -12 9z" fill="#18d818" stroke="#555" strokeWidth={0.5} />
                </svg>
                <span className="ml-[18px] text-[12px] font-bold">Пуск</span>
              </CtlBtn>
              <CtlBtn w={44}>
                <span className="text-[14px] font-bold text-[#0a7a1a]">21.95</span>
              </CtlBtn>
              <CtlBtn w={30}><Ic>{ICONS.autoSync}</Ic></CtlBtn>
            </div>
          </GroupBox>

          <GroupBox w={68} title="Таймеры" tc="text-[#000080]">
            <div className="pl-[8px] pt-[10px] flex flex-col gap-[3px]">
              <TimerBtn hand="M13 12L16 5M13 12l-3 3" arrow="M1 6h6v-4l7 7 -7 7v-4H1z" c="#5ab8b0" />
              <TimerBtn hand="M13 12L11 4M13 12l3 3" arrow="M12 13h6v-4l7 7 -7 7v-4h-6z" c="#e840c8" />
            </div>
          </GroupBox>
        </div>
      </div>

      {/* status bar */}
      <div className="h-[20px] flex items-end pb-[1px] gap-[3px] text-[12px] pl-px">
        <div className="w-[188px] h-[17px] pl-[2px] flex items-center border-t border-r border-[#aaa]">USB Осциллограф не подключен</div>
        <div className="w-[1677px] h-[17px] border border-[#bbb] border-b-0" />
        <div className="w-[47px] h-[17px] pl-[2px] flex items-center border-t border-l border-[#aaa]">1.8</div>
      </div>
    </div>

    {/* taskbar */}
    <div className="h-1 flex border-t border-[#223] bg-[#6f8fb4]">
      <div className="w-[109px]" />
      <div className="w-[159px] bg-[#e4ecf4]" />
      <div className="w-[142px]" />
      <div className="w-[159px] bg-[#e4ecf4]" />
      <div className="w-[186px]" />
      <div className="w-[159px] bg-[#e4ecf4]" />
    </div>
  </div>
);

export default App;
